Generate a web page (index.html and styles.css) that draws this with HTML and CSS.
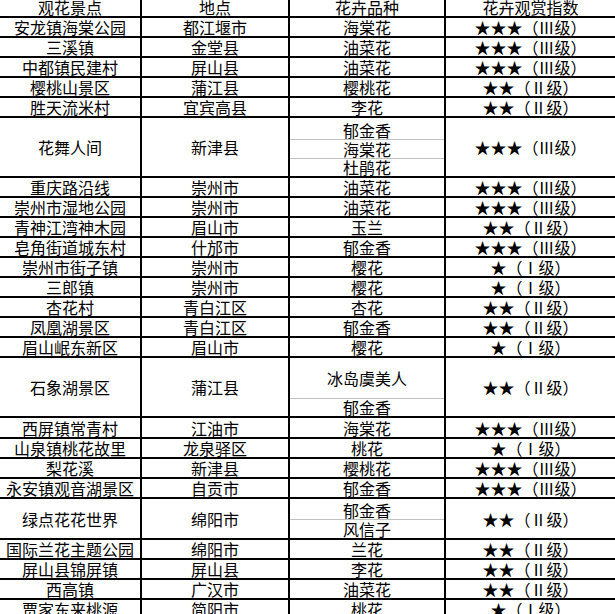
FILE: index.html
```html
<!DOCTYPE html>
<html lang="zh-CN">
<head>
<meta charset="utf-8">
<title>观花景点</title>
<link rel="stylesheet" href="styles.css">
</head>
<body>
<div class="sheet">
  <div class="c">观花景点</div><div class="c">地点</div><div class="c">花卉品种</div><div class="c">花卉观赏指数</div>

  <div class="c">安龙镇海棠公园</div><div class="c">都江堰市</div><div class="c">海棠花</div><div class="c">★★★（Ⅲ级）</div>
  <div class="c">三溪镇</div><div class="c">金堂县</div><div class="c">油菜花</div><div class="c">★★★（Ⅲ级）</div>
  <div class="c">中都镇民建村</div><div class="c">屏山县</div><div class="c">油菜花</div><div class="c">★★★（Ⅲ级）</div>
  <div class="c">樱桃山景区</div><div class="c">蒲江县</div><div class="c">樱桃花</div><div class="c">★★（Ⅱ级）</div>
  <div class="c">胜天流米村</div><div class="c">宜宾高县</div><div class="c">李花</div><div class="c">★★（Ⅱ级）</div>

  <div class="c m3">花舞人间</div><div class="c m3">新津县</div>
  <div class="c m3 subs">
    <div class="sub s21">郁金香</div><div class="sub s18">海棠花</div><div class="sub fill">杜鹃花</div>
  </div>
  <div class="c m3">★★★（Ⅲ级）</div>

  <div class="c">重庆路沿线</div><div class="c">崇州市</div><div class="c">油菜花</div><div class="c">★★★（Ⅲ级）</div>
  <div class="c">崇州市湿地公园</div><div class="c">崇州市</div><div class="c">油菜花</div><div class="c">★★★（Ⅲ级）</div>
  <div class="c">青神江湾神木园</div><div class="c">眉山市</div><div class="c">玉兰</div><div class="c">★★（Ⅱ级）</div>
  <div class="c">皂角街道城东村</div><div class="c">什邡市</div><div class="c">郁金香</div><div class="c">★★★（Ⅲ级）</div>
  <div class="c">崇州市街子镇</div><div class="c">崇州市</div><div class="c">樱花</div><div class="c">★（Ⅰ级）</div>
  <div class="c">三郎镇</div><div class="c">崇州市</div><div class="c">樱花</div><div class="c">★（Ⅰ级）</div>
  <div class="c">杏花村</div><div class="c">青白江区</div><div class="c">杏花</div><div class="c">★★（Ⅱ级）</div>
  <div class="c">凤凰湖景区</div><div class="c">青白江区</div><div class="c">郁金香</div><div class="c">★★（Ⅱ级）</div>
  <div class="c">眉山岷东新区</div><div class="c">眉山市</div><div class="c">樱花</div><div class="c">★（Ⅰ级）</div>

  <div class="c m3">石象湖景区</div><div class="c m3">蒲江县</div>
  <div class="c m3 subs">
    <div class="sub s40 mid">冰岛虞美人</div><div class="sub fill">郁金香</div>
  </div>
  <div class="c m3">★★（Ⅱ级）</div>

  <div class="c">西屏镇常青村</div><div class="c">江油市</div><div class="c">海棠花</div><div class="c">★★★（Ⅲ级）</div>
  <div class="c">山泉镇桃花故里</div><div class="c">龙泉驿区</div><div class="c">桃花</div><div class="c">★（Ⅰ级）</div>
  <div class="c">梨花溪</div><div class="c">新津县</div><div class="c">樱桃花</div><div class="c">★★★（Ⅲ级）</div>
  <div class="c">永安镇观音湖景区</div><div class="c">自贡市</div><div class="c">郁金香</div><div class="c">★★★（Ⅲ级）</div>

  <div class="c m2">绿点花花世界</div><div class="c m2">绵阳市</div>
  <div class="c m2 subs">
    <div class="sub s20">郁金香</div><div class="sub fill">风信子</div>
  </div>
  <div class="c m2">★★（Ⅱ级）</div>

  <div class="c">国际兰花主题公园</div><div class="c">绵阳市</div><div class="c">兰花</div><div class="c">★★（Ⅱ级）</div>
  <div class="c">屏山县锦屏镇</div><div class="c">屏山县</div><div class="c">李花</div><div class="c">★★（Ⅱ级）</div>
  <div class="c">西高镇</div><div class="c">广汉市</div><div class="c">油菜花</div><div class="c">★★（Ⅱ级）</div>
  <div class="c">贾家东来桃源</div><div class="c">简阳市</div><div class="c">桃花</div><div class="c">★（Ⅰ级）</div>
</div>
</body>
</html>
```

FILE: styles.css
```css
html, body {
  margin: 0;
  padding: 0;
  background: #ffffff;
  overflow: hidden;
  width: 615px;
  height: 614px;
}

.sheet {
  display: grid;
  grid-template-columns: 140px 146px 154px 169px;
  grid-template-rows: repeat(21, 18px) 19px repeat(4, 18px) 19px;
  grid-auto-rows: 18px;
  gap: 2px;
  padding: 2px;
  background: #000000;
  width: max-content;
  margin: -4px 0 0 -2px;
  font-family: "Noto Sans CJK SC", "Noto Sans", sans-serif;
  font-size: 16px;
  line-height: 18px;
  color: #000000;
}

.c {
  background: #ffffff;
  display: flex;
  align-items: flex-end;
  justify-content: center;
  white-space: nowrap;
  overflow: hidden;
}

.m3 {
  grid-row: span 3;
  align-items: center;
}

.m2 {
  grid-row: span 2;
  align-items: center;
}

.subs {
  flex-direction: column;
  align-items: stretch;
  justify-content: flex-start;
}

.sub {
  display: flex;
  align-items: flex-end;
  justify-content: center;
  border-top: 1px solid #c0c0c0;
  flex: none;
  overflow: hidden;
}

.sub:first-child {
  border-top: none;
}

.mid {
  align-items: center;
}

.fill { flex: 1 1 auto; min-height: 0; }
.s40 { height: 40px; }
.s21 { height: 21px; }
.s20 { height: 20px; }
.s18 { height: 18px; }
```
